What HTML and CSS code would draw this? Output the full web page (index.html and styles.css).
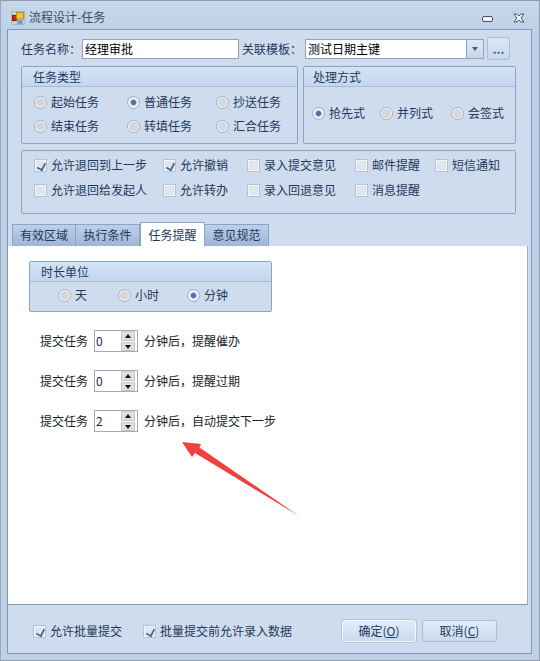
FILE: index.html
```html
<!DOCTYPE html>
<html lang="zh-CN">
<head>
    <meta charset="UTF-8">
    <meta name="viewport" content="width=device-width, initial-scale=1.0">
    <title>流程设计-任务</title>
    <link rel="stylesheet" href="styles.css">
</head>
<body>
    <div class="window">
        <div class="titlebar">
            <svg class="app-icon" width="14" height="14" viewBox="0 0 14 14">
                <rect x="0.5" y="0.5" width="13" height="13" fill="#cfcfc9" stroke="#aeb4ba"/>
                <rect x="1.5" y="4.5" width="4" height="5" fill="#c4281c" stroke="#7a1a12"/>
                <rect x="5.5" y="1.5" width="7" height="6.5" fill="#f6c52c" stroke="#b98a1c"/>
                <rect x="6.5" y="9.5" width="5" height="3.5" fill="#5f94e6" stroke="#8fb0e0"/>
            </svg>
            <span class="title">流程设计-任务</span>
            <svg class="win-btn min-btn" width="11" height="6" viewBox="0 0 11 6">
                <rect x="0.5" y="0.5" width="10" height="5" rx="1.5" fill="#f2f5f9" stroke="#46536a"/>
            </svg>
            <svg class="win-btn close-btn" width="12" height="10" viewBox="0 0 12 10">
                <path d="M1 1 L4 1 L6 3 L8 1 L11 1 L8 5 L11 9 L8 9 L6 7 L4 9 L1 9 L4 5 Z" fill="#f2f5f9" stroke="#46536a" stroke-width="1"/>
            </svg>
        </div>

        <div class="frame">
            <div class="top-row">
                <span class="name-label">任务名称：</span>
                <div class="textbox name-box">经理审批</div>
                <span class="template-label">关联模板：</span>
                <div class="textbox combo">
                    <span class="combo-text">测试日期主键</span>
                    <span class="combo-arrow"></span>
                </div>
                <div class="more-btn">...</div>
            </div>

            <div class="group-row">
                <div class="group type-group">
                    <div class="group-head">任务类型</div>
                    <div class="type-grid">
                        <label class="radio-item"><i class="radio"></i>起始任务</label>
                        <label class="radio-item"><i class="radio checked"></i>普通任务</label>
                        <label class="radio-item"><i class="radio"></i>抄送任务</label>
                        <label class="radio-item"><i class="radio"></i>结束任务</label>
                        <label class="radio-item"><i class="radio"></i>转填任务</label>
                        <label class="radio-item"><i class="radio"></i>汇合任务</label>
                    </div>
                </div>
                <div class="group mode-group">
                    <div class="group-head">处理方式</div>
                    <div class="mode-grid">
                        <label class="radio-item"><i class="radio checked"></i>抢先式</label>
                        <label class="radio-item"><i class="radio"></i>并列式</label>
                        <label class="radio-item"><i class="radio"></i>会签式</label>
                    </div>
                </div>
            </div>

            <div class="options">
                <label class="check-item"><i class="check checked"></i>允许退回到上一步</label>
                <label class="check-item"><i class="check checked"></i>允许撤销</label>
                <label class="check-item"><i class="check"></i>录入提交意见</label>
                <label class="check-item"><i class="check"></i>邮件提醒</label>
                <label class="check-item"><i class="check"></i>短信通知</label>
                <label class="check-item"><i class="check"></i>允许退回给发起人</label>
                <label class="check-item"><i class="check"></i>允许转办</label>
                <label class="check-item"><i class="check"></i>录入回退意见</label>
                <label class="check-item"><i class="check"></i>消息提醒</label>
            </div>

            <div class="tabs">
                <div class="tab tab-first">有效区域</div>
                <div class="tab">执行条件</div>
                <div class="tab active">任务提醒</div>
                <div class="tab">意见规范</div>
            </div>

            <div class="tab-panel">
                <div class="group unit-group">
                    <div class="group-head">时长单位</div>
                    <div class="unit-grid">
                        <label class="radio-item"><i class="radio"></i>天</label>
                        <label class="radio-item"><i class="radio"></i>小时</label>
                        <label class="radio-item"><i class="radio checked"></i>分钟</label>
                    </div>
                </div>

                <div class="remind-row">
                    <span>提交任务</span>
                    <div class="spin"><span class="spin-value">0</span><span class="spin-btns"><b class="up"></b><b class="down"></b></span></div>
                    <span>分钟后，提醒催办</span>
                </div>
                <div class="remind-row">
                    <span>提交任务</span>
                    <div class="spin"><span class="spin-value">0</span><span class="spin-btns"><b class="up"></b><b class="down"></b></span></div>
                    <span>分钟后，提醒过期</span>
                </div>
                <div class="remind-row">
                    <span>提交任务</span>
                    <div class="spin"><span class="spin-value">2</span><span class="spin-btns"><b class="up"></b><b class="down"></b></span></div>
                    <span>分钟后，自动提交下一步</span>
                </div>
            </div>

            <div class="footer">
                <label class="check-item batch-one"><i class="check checked"></i>允许批量提交</label>
                <label class="check-item batch-two"><i class="check checked"></i>批量提交前允许录入数据</label>
                <div class="btn btn-ok">确定(<u>O</u>)</div>
                <div class="btn btn-cancel">取消(<u>C</u>)</div>
            </div>
        </div>

        <svg class="red-arrow" width="540" height="661" viewBox="0 0 540 661">
            <polygon points="182,442 201,444 199.5,447.5 299,516 195,453 192,457" fill="#f2403e"/>
        </svg>
    </div>
</body>
</html>
```

FILE: styles.css
```css
* {
    box-sizing: border-box;
}
html, body {
    margin: 0;
    padding: 0;
}
body {
    font-family: "Noto Sans CJK SC", "Liberation Sans", sans-serif;
    font-size: 12px;
    line-height: 16px;
    color: #1e395b;
}
i, b {
    display: block;
}
.window {
    position: relative;
    width: 540px;
    height: 661px;
    display: flex;
    flex-direction: column;
    padding: 0 7px 6px 6px;
    background: linear-gradient(#c6d7eb, #bccfe6 40px, #bed1e7);
    border: 1px solid #8d9aab;
    border-left-color: #9aa8b8;
}
.titlebar {
    height: 28px;
    flex: none;
    display: flex;
    align-items: center;
    padding-left: 4px;
}
.app-icon {
    flex: none;
    margin-top: 5px;
}
.title {
    margin-left: 4px;
    margin-top: 4px;
    color: #3b4a5e;
}
.win-btn {
    flex: none;
    margin-top: 8px;
}
.min-btn {
    margin-left: auto;
    margin-right: 20px;
}
.close-btn {
    margin-right: 7px;
    margin-top: 5px;
}
.frame {
    flex: 1;
    display: flex;
    flex-direction: column;
    background: #cfdcee;
    border: 1px solid #7f99bb;
    padding-top: 7px;
}

/* top row */
.top-row {
    height: 23px;
    display: flex;
    align-items: center;
    margin-left: 13px;
}
.name-label {
    width: 61px;
}
.textbox {
    height: 20px;
    background: #fff;
    border: 1px solid #8aa4c6;
    color: #000;
    line-height: 18px;
    padding-left: 2px;
}
.name-box {
    width: 157px;
}
.template-label {
    width: 63px;
    margin-left: 3px;
}
.combo {
    width: 179px;
    display: flex;
    justify-content: space-between;
    padding-right: 0;
}
.combo-arrow {
    width: 17px;
    height: 18px;
    border-left: 1px solid #8aa4c6;
    background: linear-gradient(#dde8f5, #c6d7ec);
    position: relative;
}
.combo-arrow::after {
    content: "";
    position: absolute;
    left: 5px;
    top: 7px;
    border-top: 4px solid #4a5a70;
    border-left: 3px solid transparent;
    border-right: 3px solid transparent;
}
.more-btn {
    width: 23px;
    height: 23px;
    margin-left: 3px;
    border: 1px solid #aabcd4;
    border-radius: 3px;
    background: linear-gradient(#dbe6f4, #c9d9ec);
    color: #1f5fa8;
    text-align: center;
    font-weight: bold;
    line-height: 21px;
}

/* group boxes */
.group-row {
    display: flex;
    gap: 5px;
    margin: 6px 0 0 13px;
}
.group {
    background: #cfdcee;
    border: 1px solid #8aa4c6;
    border-radius: 2px;
}
.group-head {
    height: 20px;
    padding-left: 11px;
    line-height: 19px;
    background: linear-gradient(#d4e3f6, #c3d6ee);
    border-bottom: 1px solid #a5bbd8;
}
.type-group {
    width: 277px;
    height: 78px;
}
.mode-group {
    width: 213px;
    height: 78px;
}
.mode-group .group-head {
    padding-left: 9px;
}
.radio-item, .check-item {
    display: flex;
    align-items: center;
    gap: 4px;
    white-space: nowrap;
    height: 16px;
}
.radio {
    flex: none;
    width: 13px;
    height: 13px;
    border-radius: 50%;
    border: 1px solid #9cafc9;
    background: radial-gradient(circle, #d6d6d6 0, #d4d6da 52%, #f2f5f9 62%);
}
.radio.checked {
    border-color: #9ab0ce;
    background: radial-gradient(circle, #46689c 0, #5b7eb0 32%, #f0f4fa 44%, #e6edf6 70%);
}
.type-grid {
    display: grid;
    grid-template-columns: 93px 89px auto;
    row-gap: 8px;
    padding: 7px 0 0 12px;
}
.mode-grid {
    display: grid;
    grid-template-columns: 68px 71px auto;
    padding: 18px 0 0 8px;
}

/* option checkboxes */
.options {
    height: 64px;
    margin: 6px 15px 0 13px;
    border: 1px solid #8aa4c6;
    border-radius: 2px;
    display: grid;
    grid-template-columns: 129px 84px 108px 80px auto;
    grid-auto-rows: 16px;
    row-gap: 9px;
    padding: 6px 0 0 12px;
}
.check {
    flex: none;
    width: 13px;
    height: 13px;
    border: 1px solid #aec3de;
    background: #e2e5e9;
    box-shadow: inset 0 0 0 1px #f3f5f8;
    position: relative;
}
.check.checked::after {
    content: "";
    position: absolute;
    left: 3px;
    top: 1px;
    width: 5px;
    height: 8px;
    border-right: 2px solid #46659a;
    border-bottom: 2px solid #46659a;
    transform: rotate(28deg) scale(0.85);
}

/* tabs */
.tabs {
    display: flex;
    height: 24px;
    margin: 8px 0 0 4px;
    align-items: flex-end;
}
.tab {
    width: 64px;
    height: 22px;
    text-align: center;
    line-height: 20px;
    background: linear-gradient(#bdd0e8, #9db6d6);
    border: 1px solid #8aa4c6;
    border-bottom: none;
    border-left: none;
}
.tab-first {
    border-left: 1px solid #8aa4c6;
}
.tab.active {
    width: 65px;
    height: 24px;
    background: #fff;
    border-top: 1px solid #8aa4c6;
    border-left: 1px solid #8aa4c6;
    line-height: 23px;
}
.tab-panel {
    height: 359px;
    flex: none;
    margin-right: 3px;
    background: #fff;
    color: #222;
    border-right: 1px solid #a3adb9;
    border-bottom: 1px solid #8298b4;
    padding-top: 15px;
}
.unit-group {
    width: 243px;
    height: 51px;
    margin: 0 0 9px 21px;
    color: #1e395b;
}
.unit-grid {
    display: grid;
    grid-template-columns: 60px 69px auto;
    padding: 5px 0 0 28px;
}
.remind-row {
    display: flex;
    align-items: center;
    height: 22px;
    margin-left: 32px;
    margin-top: 18px;
}
.spin {
    width: 44px;
    height: 22px;
    margin: 0 6px;
    border: 1px solid #aaa;
    display: flex;
    justify-content: space-between;
    align-items: center;
    padding: 0 2px 0 1px;
    color: #14246a;
}
.spin-btns {
    width: 14px;
    height: 20px;
    display: flex;
    flex-direction: column;
    gap: 1px;
}
.spin-btns b {
    flex: 1;
    background: #dedede;
    border: 1px solid #c6c6c6;
    position: relative;
}
.spin-btns b::after {
    content: "";
    position: absolute;
    left: 3px;
    top: 2px;
    border-left: 3px solid transparent;
    border-right: 3px solid transparent;
}
.spin-btns .up::after {
    border-bottom: 4px solid #111;
}
.spin-btns .down::after {
    border-top: 4px solid #111;
}

/* footer */
.footer {
    flex: 1;
    display: flex;
    align-items: center;
    padding-left: 25px;
    padding-top: 4px;
}
.batch-one {
    width: 110px;
}
.batch-two {
    width: 199px;
}
.btn {
    width: 74px;
    height: 22px;
    text-align: center;
    line-height: 20px;
    border: 1px solid #a9bcd5;
    border-radius: 3px;
    background: linear-gradient(#e3edf9, #c8d9ee);
}
.btn-ok {
    border-color: #f4f7fb;
    box-shadow: 0 0 0 1px #b5c6dc;
}
.btn-cancel {
    width: 75px;
    margin-left: 6px;
}
.red-arrow {
    position: absolute;
    left: -1px;
    top: -1px;
    pointer-events: none;
}
```
